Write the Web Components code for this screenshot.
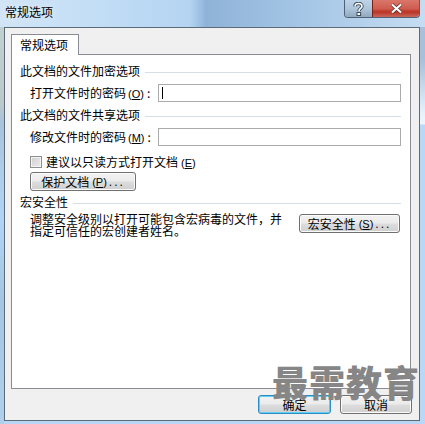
<!DOCTYPE html>
<html lang="zh-CN"><head><meta charset="utf-8"><title>常规选项</title>
<style>
html,body{margin:0;padding:0;width:425px;height:424px;overflow:hidden}
body{font:12px/12px "Noto Sans CJK SC","Liberation Sans",sans-serif;color:#000}
</style></head><body>
<dlg-window heading="常规选项">
  <dlg-tabs label="常规选项">
    <dlg-group heading="此文档的文件加密选项">
      <dlg-field key="O" caret>打开文件时的密码</dlg-field>
    </dlg-group>
    <dlg-group heading="此文档的文件共享选项" style="margin-top:6px">
      <dlg-field key="M">修改文件时的密码</dlg-field>
      <dlg-check key="E" style="margin-top:10px">建议以只读方式打开文档</dlg-check>
      <dlg-button key="P" dots style="margin:4px 0 0 10px;width:106px">保护文档</dlg-button>
    </dlg-group>
    <dlg-group heading="宏安全性" style="margin-top:4px">
      <dlg-macro></dlg-macro>
    </dlg-group>
  </dlg-tabs>
</dlg-window>
<script>
function def(name,css,html){
  customElements.define(name,class extends HTMLElement{
    connectedCallback(){
      if(this.shadowRoot)return;
      const r=this.attachShadow({mode:"open"});
      r.innerHTML="<style>"+css+"</style>"+(typeof html==="function"?html(this):html);
    }
  });
}
const mn=k=>k?`<span class="k">(<u>${k}</u>)</span>`:"";
def("dlg-button",`
:host{display:block;box-sizing:border-box;height:19px;border:1px solid #707070;border-radius:3px;
background:linear-gradient(#f2f2f2 0,#ebebeb 48%,#dddddd 52%,#cfcfcf 100%);box-shadow:inset 0 0 0 1px #fbfbfb}
:host([default]){border-color:#2c8cc4;box-shadow:inset 0 0 0 1px #5fd0f4}
div{display:flex;align-items:center;justify-content:center;height:100%;white-space:nowrap}
.k{font:11px/12px "Liberation Sans",sans-serif;margin-left:3px}
.d{font:12px/12px "Liberation Sans",sans-serif;letter-spacing:2px;margin-left:2px}
`,e=>`<div><slot></slot>${mn(e.getAttribute("key"))}${e.hasAttribute("dots")?'<span class="d">...</span>':""}</div>`);
def("dlg-field",`
:host{display:flex;align-items:center;height:18px;padding:6px 0 0 10px}
.t{flex:none;width:128px;white-space:nowrap}
.k{font:11px/12px "Liberation Sans",sans-serif;margin:0 3px 0 2px}
.i{flex:1;box-sizing:border-box;height:18px;border:1px solid #ababab;background:#fff;display:flex;align-items:center;padding-left:3px}
.c{width:1px;height:12px;background:#000}
`,e=>`<span class="t"><slot></slot>${mn(e.getAttribute("key"))}:</span><div class="i">${e.hasAttribute("caret")?'<span class="c"></span>':""}</div>`);
def("dlg-check",`
:host{display:flex;align-items:center;gap:4px;height:12px;padding-left:10px}
.b{box-sizing:border-box;width:12px;height:12px;border:1px solid #8e8f8f;background:linear-gradient(135deg,#cfcfcf,#ececec);box-shadow:inset 0 0 0 1px #f4f4f4}
.k{font:11px/12px "Liberation Sans",sans-serif;margin-left:3px}
`,e=>`<span class="b"></span><span><slot></slot>${mn(e.getAttribute("key"))}</span>`);
def("dlg-group",`
:host{display:block}
.h{display:flex;align-items:center;gap:5px;height:14px;white-space:nowrap}
.h i{flex:1;height:1px;background:#d5dfe5;margin-top:2px}
`,e=>`<div class="h"><span>${e.getAttribute("heading")}</span><i></i></div><div class="b"><slot></slot></div>`);
def("dlg-macro",`
:host{display:flex;align-items:flex-start;justify-content:space-between;padding:4px 1px 0 10px;height:28px;box-sizing:border-box}
p{margin:0;width:262px;line-height:12px}
dlg-button{width:101px;flex:none;margin-top:1px}
`,`<p>调整安全级别以打开可能包含宏病毒的文件，并指定可信任的宏创建者姓名。</p><dlg-button key="S" dots>宏安全性</dlg-button>`);
def("dlg-tabs",`
:host{display:block;margin:6px 8px 0 6px}
.tab{box-sizing:border-box;width:68px;height:21px;margin-bottom:-1px;position:relative;z-index:1;border:1px solid #898c95;border-bottom:none;background:#fff;padding:4px 0 0 8px}
.panel{box-sizing:border-box;height:335px;border:1px solid #898c95;background:#fff;padding:9px 9px 0 8px}
`,e=>`<div class="tab">${e.getAttribute("label")}</div><div class="panel"><slot></slot></div>`);
def("dlg-window",`
:host{display:flex;flex-direction:column;box-sizing:border-box;width:425px;height:424px;position:relative;overflow:hidden;
background:
 linear-gradient(90deg,#d2e5f6 0,#c2ddf5 100px,#b4d4f2 190px,#8fb3d8 206px,#a4c5e5 300px,#c5ddf2 100%) top/100% 27px no-repeat,
 linear-gradient(#c5d2d2 0,#bcc9c8 100px,#a9c3dc 125px,#aecde8 170px,#b0d4f6 220px,#a4c6e2 300px,#b0cfeb 100%) left/4px 100% no-repeat,
 linear-gradient(#a9bfd9 0,#a8c0da 60px,#e2effa 110px,#eef6fc 124px,#b8d8f6 125px,#b8d8f6 100%) right/5px 100% no-repeat,
 #b8d6f3}
.bar{flex:none;height:27px;display:flex;justify-content:space-between;align-items:flex-start;padding:0 5px;box-sizing:border-box}
.ti{margin-top:6px;text-shadow:0 0 6px #e8f3fc}
.ctl{display:flex;width:76px;height:18px;box-sizing:border-box;border:1px solid #4f6276;border-top:none;border-radius:0 0 4px 4px;overflow:hidden}
.help{width:27px;background:linear-gradient(#bdd3e7,#aec6da 50%,#8fa9bf);display:flex;align-items:center;justify-content:center}
.close{flex:1;border-left:1px solid #7a1f15;background:linear-gradient(#d9776a,#cf5d50 50%,#b93427 70%,#c9675a);display:flex;align-items:center;justify-content:center}
.body{flex:none;box-sizing:border-box;margin:0 5px 0 4px;height:394px;background:#f0f0f0;border:1px solid #5c6b7a}
.foot{display:flex;justify-content:flex-end;gap:9px;margin:6px 7px 0 0}
dlg-button{width:72px}
dlg-button[default]{width:73px}
.wm{position:absolute;left:272px;top:359px;font:900 36px/44px "Noto Sans CJK SC",sans-serif;color:#868686;white-space:nowrap;letter-spacing:1px}
`,e=>`<div class="bar"><span class="ti">${e.getAttribute("heading")}</span>
<div class="ctl"><div class="help"><svg width="11" height="14" viewBox="0 0 11 14"><path d="M2 4.500C2 2.500 3.500 1.500 5.500 1.500S9 2.600 9 4.300C9 6.500 6 6.500 6 9" fill="none" stroke="#3d4c5b" stroke-width="3.400"/><path d="M2 4.500C2 2.500 3.500 1.500 5.500 1.500S9 2.600 9 4.300C9 6.500 6 6.500 6 9" fill="none" stroke="#fff" stroke-width="1.600"/><rect x="4" y="10.500" width="3.600" height="3" fill="#fff" stroke="#3d4c5b" stroke-width="1"/></svg></div>
<div class="close"><svg width="13" height="11" viewBox="0 0 13 11"><path d="M2 1.500L11 9.500M11 1.500L2 9.500" stroke="#5b2a25" stroke-width="3.600"/><path d="M2 1.500L11 9.500M11 1.500L2 9.500" stroke="#fff" stroke-width="2.200"/></svg></div></div></div>
<div class="body"><slot></slot><div class="foot"><dlg-button default>确定</dlg-button><dlg-button>取消</dlg-button></div></div>
<div class="wm">最需教育</div>`);
</script>
</body></html>
